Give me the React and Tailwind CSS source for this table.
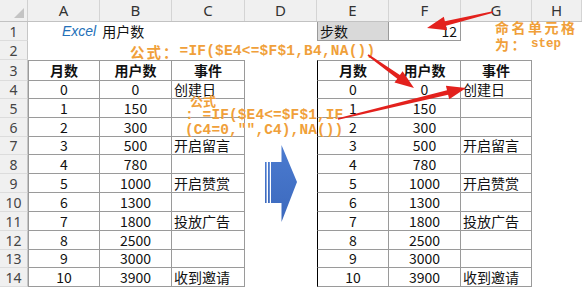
import React from "react";

const data = [
  [0, 0, "创建日"],
  [1, 150, ""],
  [2, 300, ""],
  [3, 500, "开启留言"],
  [4, 780, ""],
  [5, 1000, "开启赞赏"],
  [6, 1300, ""],
  [7, 1800, "投放广告"],
  [8, 2500, ""],
  [9, 3000, ""],
  [10, 3900, "收到邀请"],
];

// row 4..14 heights
const rowH = [
  "h-[18px]", "h-[19px]", "h-[19px]", "h-[18px]", "h-[19px]", "h-[19px]",
  "h-[19px]", "h-[19px]", "h-[19px]", "h-[18px]", "h-[19px]",
];

const colW = ["w-[72px]", "w-[72px]", "w-[73px]", "w-[72px]", "w-[72px]", "w-[72px]", "w-[71px]", "flex-1"];
const letters = ["A", "B", "C", "D", "E", "F", "G", "H"];

const cellFont = "font-['Noto_Sans_CJK_SC',sans-serif] text-[14px] text-[#111]";
const line = "border-[#9a9a9a]";

function RowHead({ n }) {
  return (
    <div className="w-[28px] shrink-0 h-full bg-[#f0f0f0] border-r border-b border-r-[#c6c6c6] border-b-[#dcdcdc] flex items-center justify-center font-['Noto_Sans',sans-serif] text-[14px] text-[#444]">
      {n}
    </div>
  );
}

function Cell({ w, className = "", children }) {
  return (
    <div className={`${w} shrink-0 h-full flex items-center whitespace-nowrap ${cellFont} ${className}`}>
      {children}
    </div>
  );
}

function TableCells({ row, header, first, right }) {
  const t = first ? "border-t" : "";
  const edge = right ? "border-l border-l-black" : "border-l";
  if (header) {
    return (
      <>
        <Cell w={right ? colW[4] : colW[0]} className={`${edge} border-r border-b ${line} ${t} justify-center font-bold`}>月数</Cell>
        <Cell w={right ? colW[5] : colW[1]} className={`border-r border-b ${line} ${t} justify-center font-bold`}>用户数</Cell>
        <Cell w={right ? colW[6] : colW[2]} className={`border-r border-b ${line} ${t} justify-center font-bold`}>事件</Cell>
      </>
    );
  }
  return (
    <>
      <Cell w={right ? colW[4] : colW[0]} className={`${edge} border-r border-b ${line} justify-center`}>{row[0]}</Cell>
      <Cell w={right ? colW[5] : colW[1]} className={`border-r border-b ${line} justify-center`}>{row[1]}</Cell>
      <Cell w={right ? colW[6] : colW[2]} className={`border-r border-b ${line} pl-[2px] text-[14.5px]`}>{row[2]}</Cell>
    </>
  );
}

function arrowPoints(x1, y1, x2, y2, w1 = 1.6, w2 = 4.5, hl = 19, hw = 14) {
  const dx = x2 - x1;
  const dy = y2 - y1;
  const len = Math.hypot(dx, dy);
  const ux = dx / len;
  const uy = dy / len;
  const px = -uy;
  const py = ux;
  const bx = x2 - ux * hl;
  const by = y2 - uy * hl;
  const pts = [
    [x1 + (px * w1) / 2, y1 + (py * w1) / 2],
    [bx + (px * w2) / 2, by + (py * w2) / 2],
    [bx + (px * hw) / 2, by + (py * hw) / 2],
    [x2, y2],
    [bx - (px * hw) / 2, by - (py * hw) / 2],
    [bx - (px * w2) / 2, by - (py * w2) / 2],
    [x1 - (px * w1) / 2, y1 - (py * w1) / 2],
  ];
  return pts.map((p) => p.map((v) => v.toFixed(1)).join(",")).join(" ");
}

export default function App() {
  return (
    <div className="relative w-[582px] h-[288px] overflow-hidden bg-white">
      {/* column headers */}
      <div className="flex h-[22px] bg-[#f0f0f0] border-b border-[#c2c2c2]">
        <div className="relative w-[28px] shrink-0 border-r border-[#d0d0d0]">
          <svg className="absolute right-[3px] bottom-[3px]" width="10" height="10" viewBox="0 0 10 10">
            <polygon points="10,0 10,10 0,10" fill="#c4c4c4" />
          </svg>
        </div>
        {letters.map((l, i) => (
          <div
            key={l}
            className={`${colW[i]} shrink-0 border-r border-[#d4d4d4] flex items-center justify-center font-['Noto_Sans',sans-serif] text-[15px] text-[#333]`}
          >
            {l}
          </div>
        ))}
      </div>

      {/* row 1 */}
      <div className="flex h-[19px]">
        <RowHead n={1} />
        <Cell w={colW[0]} className="pl-[34px] overflow-visible">
          <span className="font-['Liberation_Sans',sans-serif] italic text-[#2470b8] mr-[6px]">Excel</span>
          <span>用户数</span>
        </Cell>
        <Cell w={colW[1]} />
        <Cell w={colW[2]} />
        <Cell w={colW[3]} />
        <Cell w={colW[4]} className={`bg-[#d9d9d9] border-l border-r border-b ${line} pl-[2px]`}>步数</Cell>
        <Cell w={colW[5]} className={`border-r border-b ${line} justify-end pr-[3px]`}>12</Cell>
        <Cell w={colW[6]} />
        <Cell w={colW[7]} />
      </div>

      {/* row 2 */}
      <div className="flex h-[19px]">
        <RowHead n={2} />
        <div className="flex-1" />
      </div>

      {/* row 3 headers */}
      <div className="flex h-[21px]">
        <RowHead n={3} />
        <TableCells header first />
        <Cell w={colW[3]} />
        <TableCells header first right />
        <Cell w={colW[7]} />
      </div>

      {data.map((row, i) => (
        <div key={i} className={`flex ${rowH[i]}`}>
          <RowHead n={i + 4} />
          <TableCells row={row} />
          <Cell w={colW[3]} />
          <TableCells row={row} right />
          <Cell w={colW[7]} />
        </div>
      ))}

      {/* blue striped arrow */}
      <svg className="absolute left-0 top-0 pointer-events-none" width="582" height="288" viewBox="0 0 582 288">
        <defs>
          <linearGradient id="blue" x1="0" y1="0" x2="0" y2="1">
            <stop offset="0" stopColor="#4b7bd0" />
            <stop offset="1" stopColor="#3c69bd" />
          </linearGradient>
        </defs>
        <rect x="265" y="162" width="1.6" height="41" fill="url(#blue)" />
        <rect x="268" y="162" width="1.8" height="41" fill="url(#blue)" />
        <polygon points="271,162 281.5,162 281.5,145 297,182 281.5,222 281.5,203 271,203" fill="url(#blue)" />
      </svg>

      {/* orange annotations */}
      <div className="absolute left-[130px] top-[43px] h-[18px] flex items-center text-[14.5px] font-bold text-[#f0a03a] whitespace-nowrap font-['Liberation_Mono','Noto_Sans_CJK_SC',monospace]">
        <span className="font-['Noto_Sans_CJK_SC',sans-serif] tracking-[2px]">公式：</span>
        <span className="tracking-[0.2px]">=IF($E4&lt;=$F$1,B4,NA())</span>
      </div>
      <div className="absolute left-[185px] top-[93px] text-[14.5px] font-bold text-[#f0a03a] whitespace-pre font-['Liberation_Mono','Noto_Sans_CJK_SC',monospace]">
        <div className="h-[15px] flex items-center pl-[5px] text-[13px] font-['Noto_Sans_CJK_SC',sans-serif]">公式</div>
        <div className="h-[15px] flex items-center tracking-[0.1px]">{": =IF($E4<=$F$1,IF"}</div>
        <div className="h-[15px] flex items-center tracking-[0.1px]">{'(C4=0,"",C4),NA())'}</div>
      </div>
      <div className="absolute left-[495px] top-[19px] text-[14px] font-bold text-[#f0a03a] whitespace-nowrap font-['Noto_Sans_CJK_SC',sans-serif]">
        <div className="h-[17px] flex items-center tracking-[2.5px]">命名单元格</div>
        <div className="h-[17px] flex items-center">
          <span className="tracking-[2.5px]">为：</span>
          <span className="font-['Liberation_Mono',monospace] text-[12.5px] ml-[3px]">step</span>
        </div>
      </div>

      {/* red arrows */}
      <svg className="absolute left-0 top-0 pointer-events-none" width="582" height="288" viewBox="0 0 582 288">
        <polygon points={arrowPoints(493, 12, 427, 28)} fill="#e3211d" />
        <polygon points={arrowPoints(368, 55, 414, 88)} fill="#e3211d" />
        <polygon points={arrowPoints(338, 119, 466, 88)} fill="#e3211d" />
      </svg>
    </div>
  );
}
